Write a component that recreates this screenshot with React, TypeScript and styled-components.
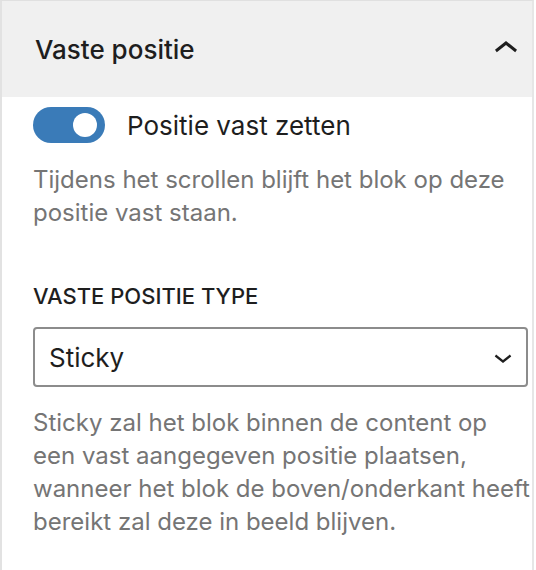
import React from "react";
import styled, { createGlobalStyle } from "styled-components";

const GlobalStyle = createGlobalStyle`
    html, body {
        margin: 0;
        padding: 0;
        background: #fff;
    }
    body {
        font-family: Inter, "Noto Sans", "Liberation Sans", sans-serif;
        -webkit-font-smoothing: antialiased;
    }
`;

const ChevronUp = () => (
    <svg width="48" height="48" viewBox="0 0 24 24" fill="#1e1e1e">
        <path d="M6.5 12.4L12 8l5.5 4.4-.9 1.2L12 10l-4.6 3.6-.9-1.2z" />
    </svg>
);

const ChevronDown = () => (
    <svg width="36" height="36" viewBox="0 0 24 24" fill="#1e1e1e">
        <path d="M17.5 11.6L12 16l-5.5-4.4.9-1.2L12 14l4.6-3.6.9 1.2z" />
    </svg>
);

export default function App() {
    return (
        <>
            <GlobalStyle />
            <Frame>
                <Panel>
                    <Header>
                        <Title>Vaste positie</Title>
                        <ChevronUp />
                    </Header>
                    <Body>
                        <ToggleRow>
                            <Toggle $on>
                                <Knob />
                            </Toggle>
                            <ToggleLabel>Positie vast zetten</ToggleLabel>
                        </ToggleRow>
                        <Help>
                            Tijdens het scrollen blijft het blok op deze
                            positie vast staan.
                        </Help>

                        <FieldLabel>Vaste positie type</FieldLabel>
                        <Select>
                            <span>Sticky</span>
                            <ChevronDown />
                        </Select>
                        <Help $after>
                            Sticky zal het blok binnen de content op een vast
                            aangegeven positie plaatsen, wanneer het blok de
                            boven/onderkant heeft bereikt zal deze in beeld
                            blijven.
                        </Help>
                    </Body>
                </Panel>
            </Frame>
        </>
    );
}

const Frame = styled.div`
    width: 536px;
    height: 570px;
    overflow: hidden;
    background: #fff;
`;

const Panel = styled.div`
    width: 534px;
    height: 570px;
    box-sizing: border-box;
    border-left: 2px solid #e2e2e2;
    border-right: 2px solid #e6e6e6;
    border-top: 1px solid #e0e0e0;
`;

const Header = styled.div`
    height: 96px;
    background: #f0f0f0;
    display: flex;
    align-items: center;
    justify-content: space-between;
    padding: 0 2px 0 33px;
`;

const Title = styled.h2`
    margin: 0;
    font-size: 26px;
    font-weight: 500;
    color: #1e1e1e;
`;

const Body = styled.div`
    padding: 10px 0 0 31px;
`;

const ToggleRow = styled.div`
    display: flex;
    align-items: center;
    gap: 22px;
`;

const Toggle = styled.div<{ $on?: boolean }>`
    width: 72px;
    height: 36px;
    border-radius: 18px;
    background: ${p => (p.$on ? "#3a7bb8" : "#fff")};
    display: flex;
    align-items: center;
    justify-content: ${p => (p.$on ? "flex-end" : "flex-start")};
    padding: 0 8px;
    box-sizing: border-box;
`;

const Knob = styled.div`
    width: 24px;
    height: 24px;
    border-radius: 50%;
    background: #fff;
`;

const ToggleLabel = styled.span`
    font-size: 26px;
    color: #1e1e1e;
`;

const Help = styled.p<{ $after?: boolean }>`
    margin: ${p => (p.$after ? "19px 0 0" : "20px 0 0")};
    font-size: 24px;
    line-height: 33px;
    color: #757575;
`;

const FieldLabel = styled.div`
    margin-top: 51px;
    font-size: 22px;
    font-weight: 500;
    text-transform: uppercase;
    color: #1e1e1e;
    line-height: 32px;
`;

const Select = styled.div`
    margin-top: 15px;
    width: 495px;
    height: 60px;
    box-sizing: border-box;
    border: 2px solid #8c8c8c;
    border-radius: 4px;
    display: flex;
    align-items: center;
    justify-content: space-between;
    padding: 0 5px 0 14px;
    font-size: 26px;
    color: #1e1e1e;
`;
